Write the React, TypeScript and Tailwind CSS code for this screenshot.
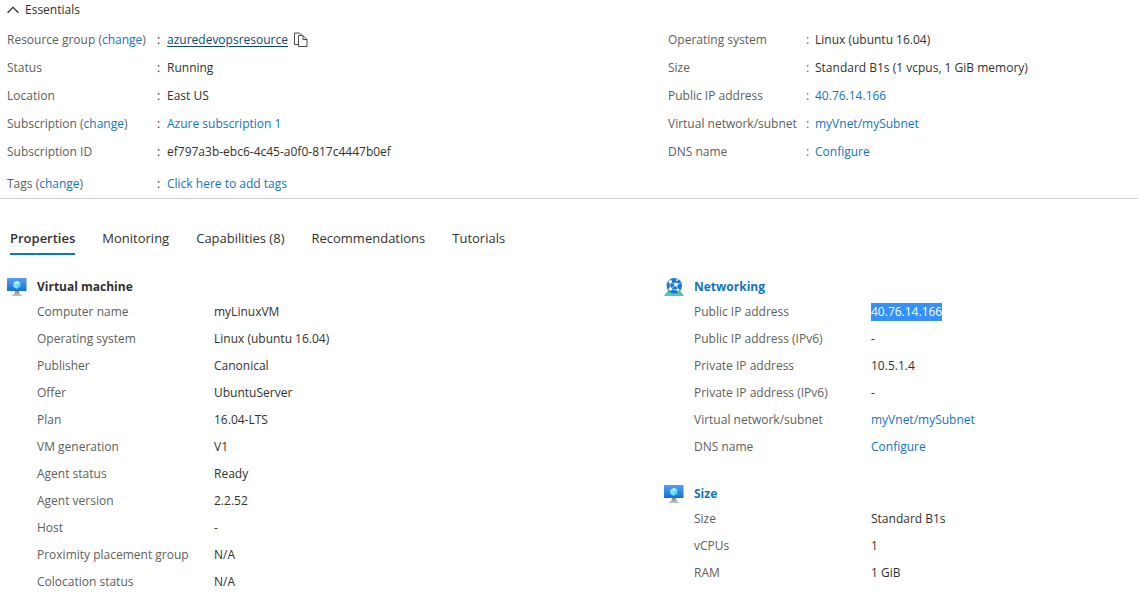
import type { ReactNode } from "react";

const LINK = "text-[#0f73cd] hover:underline";

function Link({ children }: { children: ReactNode }) {
  return (
    <a href="#" className={LINK}>
      {children}
    </a>
  );
}

function ChevronUp() {
  return (
    <svg width="12" height="8" viewBox="0 0 12 8" fill="none" stroke="#323130" strokeWidth="1.3" aria-hidden="true">
      <path d="M0.6 6.8 6 1.4l5.4 5.4" />
    </svg>
  );
}

function CopyIcon() {
  return (
    <svg width="14" height="16" viewBox="0 0 14 16" fill="none" stroke="#4a4948" strokeWidth="1" aria-hidden="true">
      <path d="M4 12.500h-3.500v-11.500h5l2 2" />
      <path d="M4.500 3.500h4.500l4 4v7h-8.500z" />
      <path d="M9 3.500v4h4" />
    </svg>
  );
}

function MachineIcon() {
  return (
    <svg width="20" height="20" viewBox="0 0 20 20" aria-hidden="true">
      <defs>
        <linearGradient id="screen" x1="0" y1="0" x2="0" y2="1">
          <stop offset="0" stopColor="#5a9df0" />
          <stop offset="1" stopColor="#0f74d4" />
        </linearGradient>
        <linearGradient id="stand" x1="0" y1="0" x2="0" y2="1">
          <stop offset="0" stopColor="#7c7c7c" />
          <stop offset="1" stopColor="#c4c4c4" />
        </linearGradient>
      </defs>
      <path d="M8 13h4c0 3 .5 4.500 3 5.200v.8H5v-.8c2.500-.7 3-2.200 3-5.200z" fill="url(#stand)" />
      <rect x="0" y="1" width="19.500" height="13" rx="0.500" fill="url(#screen)" />
      <path d="M10 3.800l3.500 2v4L10 11.800l-3.500-2v-4z" fill="#50d5f4" />
      <path d="M10 3.800l3.500 2L10 7.800l-3.500-2z" fill="#a9edfb" />
      <path d="M6.500 5.800L10 7.800v4l-3.500-2z" fill="#83e2f8" />
    </svg>
  );
}

function NetworkIcon() {
  return (
    <svg width="20" height="20" viewBox="0 0 20 20" aria-hidden="true">
      <path d="M4 13.500h12L20 19H0z" fill="#50c8a8" />
      <circle cx="10.300" cy="8.700" r="7.700" fill="#1b78d2" />
      <g fill="none" stroke="#b9dcf7" strokeWidth="0.8">
        <path d="M6 5l6 2.500 4.500-1M12 7.500l2 5.500M12 7.500L6.500 12M6 5l.5 7 7.500 1" />
      </g>
      <g fill="#fff">
        <circle cx="6.300" cy="4.800" r="1.700" />
        <circle cx="12" cy="7.500" r="1.900" />
        <circle cx="6.300" cy="12" r="1.700" />
        <circle cx="14" cy="13" r="1.500" />
        <circle cx="13" cy="3" r="1" />
      </g>
    </svg>
  );
}

type Row = { label: ReactNode; value: ReactNode };

const essentialsLeft: Row[] = [
  {
    label: <>Resource group (<Link>change</Link>)</>,
    value: (
      <span className="flex items-center gap-1.5">
        <a href="#" className="text-[#0b4a80] underline underline-offset-2">azuredevopsresource</a>
        <button type="button" aria-label="Copy to clipboard"><CopyIcon /></button>
      </span>
    ),
  },
  { label: "Status", value: "Running" },
  { label: "Location", value: "East US" },
  { label: <>Subscription (<Link>change</Link>)</>, value: <Link>Azure subscription 1</Link> },
  { label: "Subscription ID", value: "ef797a3b-ebc6-4c45-a0f0-817c4447b0ef" },
];

const essentialsRight: Row[] = [
  { label: "Operating system", value: "Linux (ubuntu 16.04)" },
  { label: "Size", value: "Standard B1s (1 vcpus, 1 GiB memory)" },
  { label: "Public IP address", value: <Link>40.76.14.166</Link> },
  { label: "Virtual network/subnet", value: <Link>myVnet/mySubnet</Link> },
  { label: "DNS name", value: <Link>Configure</Link> },
];

const machine: Row[] = [
  { label: "Computer name", value: "myLinuxVM" },
  { label: "Operating system", value: "Linux (ubuntu 16.04)" },
  { label: "Publisher", value: "Canonical" },
  { label: "Offer", value: "UbuntuServer" },
  { label: "Plan", value: "16.04-LTS" },
  { label: "VM generation", value: "V1" },
  { label: "Agent status", value: "Ready" },
  { label: "Agent version", value: "2.2.52" },
  { label: "Host", value: "-" },
  { label: "Proximity placement group", value: "N/A" },
  { label: "Colocation status", value: "N/A" },
];

const networking: Row[] = [
  { label: "Public IP address", value: <span className="block bg-[#3390ff] text-white">40.76.14.166</span> },
  { label: "Public IP address (IPv6)", value: "-" },
  { label: "Private IP address", value: "10.5.1.4" },
  { label: "Private IP address (IPv6)", value: "-" },
  { label: "Virtual network/subnet", value: <Link>myVnet/mySubnet</Link> },
  { label: "DNS name", value: <Link>Configure</Link> },
];

const size: Row[] = [
  { label: "Size", value: "Standard B1s" },
  { label: "vCPUs", value: "1" },
  { label: "RAM", value: "1 GiB" },
];

const tabs = ["Properties", "Monitoring", "Capabilities (8)", "Recommendations", "Tutorials"];

function EssentialRow({ row, wide }: { row: Row; wide?: boolean }) {
  return (
    <div className="flex h-7 items-center whitespace-nowrap">
      <dt className={`shrink-0 text-[#605e5c] ${wide ? "w-[150px]" : "w-[138px]"}`}>{row.label}</dt>
      <span className={`shrink-0 ${wide ? "w-[10px] text-[#323130]" : "w-[9px] text-[#4f6f8f]"}`}>:</span>
      <dd>{row.value}</dd>
    </div>
  );
}

function Section({ icon, title, rows, link }: { icon: ReactNode; title: string; rows: Row[]; link?: boolean }) {
  return (
    <section>
      <h3 className="flex h-[23px] items-center font-bold">
        <span className="w-[30px] shrink-0">{icon}</span>
        {link ? <Link>{title}</Link> : title}
      </h3>
      <dl className="pl-[30px]">
        {rows.map((row, i) => (
          <div key={i} className="flex h-[27px] items-center whitespace-nowrap">
            <dt className="w-[177px] shrink-0 text-[#605e5c]">{row.label}</dt>
            <dd>{row.value}</dd>
          </div>
        ))}
      </dl>
    </section>
  );
}

export default function App() {
  return (
    <main className="min-h-screen bg-white pb-2 font-['Open_Sans','Noto_Sans',sans-serif] text-[12px] leading-[18px] text-[#323130]">
      <section className="border-b border-[#d2d0ce] pt-px pl-[7px]">
        <button type="button" className="mb-[7px] flex items-center gap-1.5">
          <ChevronUp />
          Essentials
        </button>
        <div className="grid grid-cols-[661fr_470fr]">
          <dl>
            {essentialsLeft.map((row, i) => (
              <EssentialRow key={i} row={row} wide />
            ))}
          </dl>
          <dl>
            {essentialsRight.map((row, i) => (
              <EssentialRow key={i} row={row} />
            ))}
          </dl>
        </div>
        <dl className="mt-1">
          <EssentialRow wide row={{ label: <>Tags (<Link>change</Link>)</>, value: <Link>Click here to add tags</Link> }} />
        </dl>
      </section>

      <div role="tablist" className="flex gap-[27px] pt-[29px] pl-[10px] text-[13px] leading-5">
        {tabs.map((tab, i) => (
          <button
            key={tab}
            type="button"
            role="tab"
            aria-selected={i === 0}
            className={`border-b-2 pb-[5px] ${i === 0 ? "border-[#0078d4] font-semibold" : "border-transparent"}`}
          >
            {tab}
          </button>
        ))}
      </div>

      <div className="grid grid-cols-[657fr_474fr] pt-5 pl-[7px]">
        <Section icon={<MachineIcon />} title="Virtual machine" rows={machine} />
        <div className="flex flex-col gap-[22px]">
          <Section icon={<NetworkIcon />} title="Networking" rows={networking} link />
          <Section icon={<MachineIcon />} title="Size" rows={size} link />
        </div>
      </div>
    </main>
  );
}
